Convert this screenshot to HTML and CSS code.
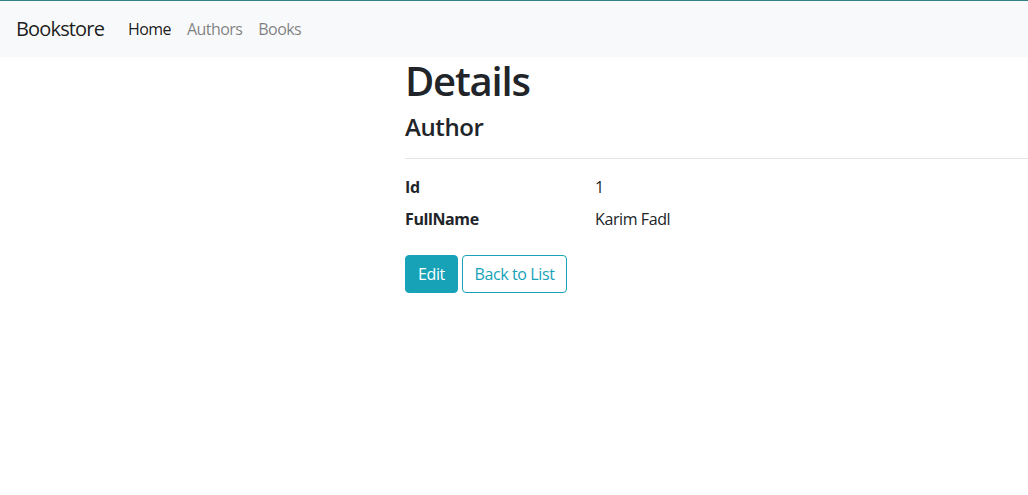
FILE: index.html
```html
<!DOCTYPE html>
<html lang="en">
<head>
<meta charset="utf-8">
<title>Details - Bookstore</title>
<link rel="stylesheet" href="styles.css">
</head>
<body>
<header>
  <nav class="navbar">
    <a class="navbar-brand" href="#">Bookstore</a>
    <ul class="navbar-nav">
      <li><a class="nav-link active" href="#">Home</a></li>
      <li><a class="nav-link" href="#">Authors</a></li>
      <li><a class="nav-link" href="#">Books</a></li>
    </ul>
  </nav>
</header>
<main class="container">
  <h1>Details</h1>
  <div>
    <h4>Author</h4>
    <hr>
    <dl class="row">
      <dt>Id</dt>
      <dd>1</dd>
      <dt>FullName</dt>
      <dd>Karim Fadl</dd>
    </dl>
  </div>
  <div class="actions">
    <a class="btn btn-info" href="#">Edit</a>
    <a class="btn btn-outline-info" href="#">Back to List</a>
  </div>
</main>
</body>
</html>
```

FILE: styles.css
```css
* { box-sizing: border-box; }
html, body {
  margin: 0;
  overflow: hidden;
}
body {
  font-family: "Open Sans", "Noto Sans", "Liberation Sans", sans-serif;
  font-size: 16px;
  line-height: 1.5;
  letter-spacing: -0.025em;
  color: #212529;
  background: #fff;
}
a { text-decoration: none; }

.navbar {
  display: flex;
  align-items: center;
  padding: 8px 16px;
  background: #f8f9fa;
  border-top: 1px solid #2f8087;
}
.navbar-brand {
  font-size: 20px;
  line-height: 30px;
  padding: 5px 0;
  margin-right: 16px;
  letter-spacing: -0.042em;
  color: rgba(0,0,0,.9);
}
.navbar-nav {
  display: flex;
  list-style: none;
  margin: 0;
  padding: 0;
}
.nav-link {
  display: block;
  padding: 8px 8px;
  letter-spacing: -0.035em;
  color: rgba(0,0,0,.5);
}
.nav-link.active { color: rgba(0,0,0,.9); }

.container {
  margin-left: 390px;
  padding: 0 0 0 15px;
}
h1, h4 {
  margin: 0 0 8px;
  font-weight: 600;
  line-height: 1.2;
}
h1 { font-size: 40px; letter-spacing: -0.03em; }
h4 { font-size: 24px; }
hr {
  margin: 16px 0;
  border: 0;
  border-top: 1px solid rgba(0,0,0,.1);
}
.row {
  display: grid;
  grid-template-columns: 190px 1fr;
  margin: 0 0 16px;
}
dt { font-weight: 700; margin-bottom: 8px; }
dd { margin: 0 0 8px; }

.btn {
  display: inline-block;
  padding: 6px 12px;
  font-size: 16px;
  line-height: 1.5;
  border: 1px solid #17a2b8;
  border-radius: 4px;
}
.btn-info { background: #17a2b8; color: #fff; }
.btn-outline-info { background: transparent; color: #17a2b8; }
```
